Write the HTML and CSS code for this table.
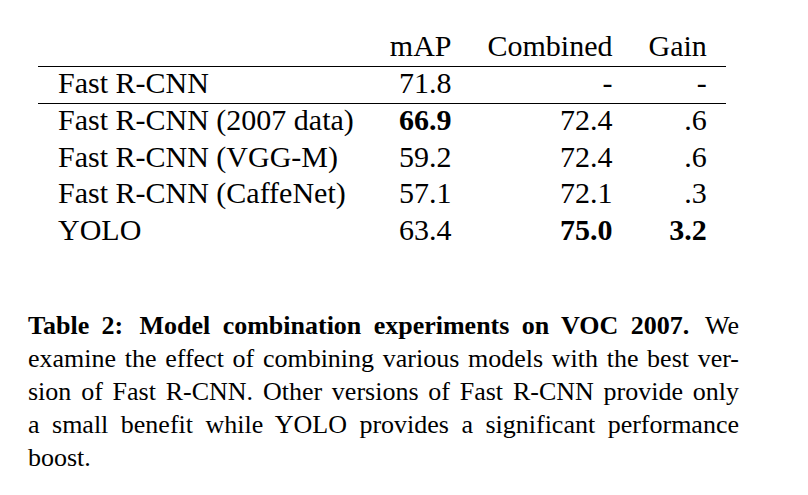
FILE: index.html
```html
<!DOCTYPE html>
<html lang="en">
<head>
<meta charset="utf-8">
<title>Table 2</title>
<link rel="stylesheet" href="styles.css">
</head>
<body>
<main class="page">
  <table class="results">
    <thead>
      <tr><th class="name"></th><th>mAP</th><th>Combined</th><th>Gain</th></tr>
    </thead>
    <tbody class="base">
      <tr><td class="name">Fast R-CNN</td><td>71.8</td><td>-</td><td>-</td></tr>
    </tbody>
    <tbody class="combos">
      <tr><td class="name">Fast R-CNN (2007 data)</td><td><b>66.9</b></td><td>72.4</td><td>.6</td></tr>
      <tr><td class="name">Fast R-CNN (VGG-M)</td><td>59.2</td><td>72.4</td><td>.6</td></tr>
      <tr><td class="name">Fast R-CNN (CaffeNet)</td><td>57.1</td><td>72.1</td><td>.3</td></tr>
      <tr><td class="name">YOLO</td><td>63.4</td><td><b>75.0</b></td><td><b>3.2</b></td></tr>
    </tbody>
  </table>
  <div class="caption">
    <div class="line"><b class="label">Table 2:</b> <b class="title">Model combination experiments on VOC 2007.</b> We</div>
    <div class="line">examine the effect of combining various models with the best ver-</div>
    <div class="line">sion of Fast R-CNN. Other versions of Fast R-CNN provide only</div>
    <div class="line">a small benefit while YOLO provides a significant performance</div>
    <div class="line last">boost.</div>
  </div>
</main>
</body>
</html>
```

FILE: styles.css
```css
html, body {
  margin: 0;
  padding: 0;
  background: #ffffff;
}

body {
  font-family: "Liberation Serif", "Times New Roman", serif;
  color: #000000;
}

.page {
  padding-top: 30px;
}

.results {
  margin-left: 38px;
  border-collapse: separate;
  border-spacing: 0;
  font-size: 30px;
  line-height: 32px;
}

.results th,
.results td {
  padding: 0 18px 4px 18px;
  text-align: right;
  font-weight: normal;
  white-space: nowrap;
}

.results .name {
  text-align: left;
  padding-left: 20px;
}

.results th:last-child,
.results td:last-child {
  padding-right: 19px;
}

.results thead th,
.results .base td {
  border-bottom: 1px solid #000000;
}

.results .combos td {
  padding-bottom: 4.7px;
}

.results b {
  font-weight: bold;
}

.caption {
  margin: 58px 0 0 28px;
  width: 711px;
  font-size: 26px;
  line-height: 33px;
}

.caption .line {
  text-align: justify;
  text-align-last: justify;
  white-space: nowrap;
}

.caption .line.last {
  text-align: left;
  text-align-last: left;
}

.caption .label {
  margin-right: 4px;
}

.caption .title {
  margin-right: 4px;
}
```
